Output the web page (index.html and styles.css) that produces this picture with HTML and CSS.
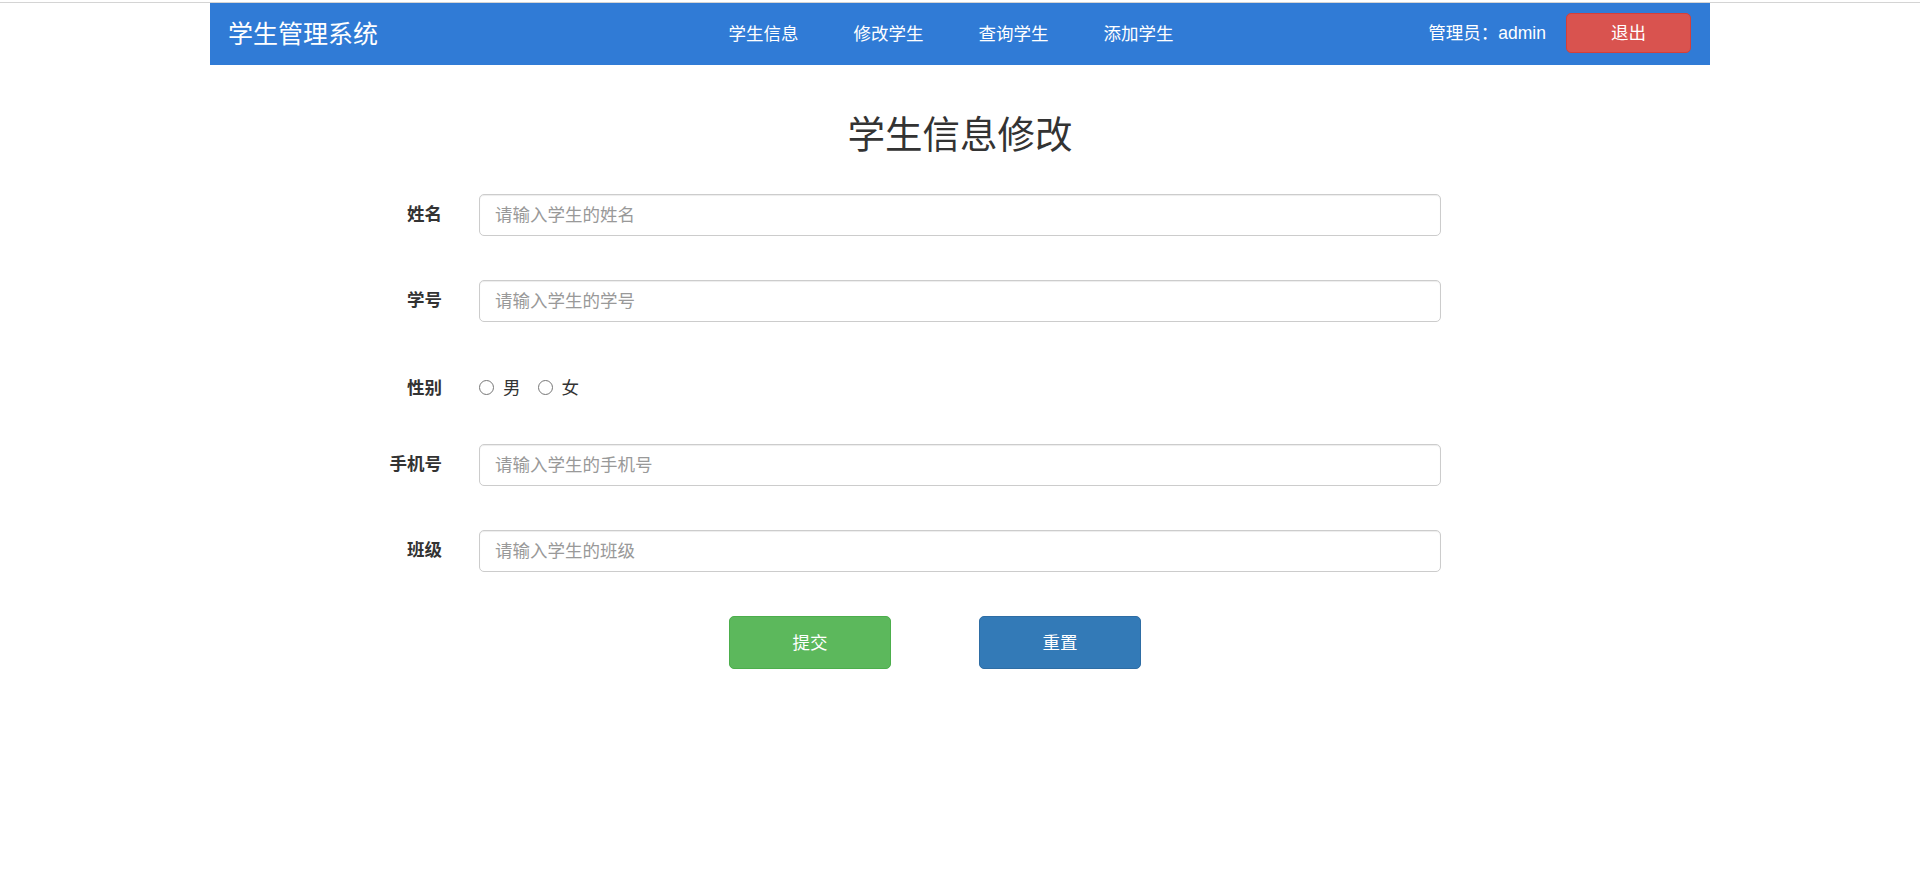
FILE: index.html
```html
<!DOCTYPE html>
<html lang="zh-CN">
<head>
<meta charset="utf-8">
<title>学生信息修改</title>
<link rel="stylesheet" href="styles.css">
</head>
<body>
<div class="topline"></div>
<nav class="navbar">
  <div class="brand">学生管理系统</div>
  <ul class="nav-links">
    <li>学生信息</li>
    <li>修改学生</li>
    <li>查询学生</li>
    <li>添加学生</li>
  </ul>
  <div class="user">
    <span class="user-name">管理员：admin</span>
    <button class="btn btn-danger">退出</button>
  </div>
</nav>
<main class="main">
  <h2 class="title">学生信息修改</h2>
  <form class="form">
    <div class="form-row">
      <label class="form-label">姓名</label>
      <input class="form-input" type="text" placeholder="请输入学生的姓名">
    </div>
    <div class="form-row">
      <label class="form-label">学号</label>
      <input class="form-input" type="text" placeholder="请输入学生的学号">
    </div>
    <div class="form-row form-row-radio">
      <label class="form-label">性别</label>
      <div class="radios">
        <label class="radio"><input type="radio" name="sex"><span>男</span></label>
        <label class="radio"><input type="radio" name="sex"><span>女</span></label>
      </div>
    </div>
    <div class="form-row">
      <label class="form-label">手机号</label>
      <input class="form-input" type="text" placeholder="请输入学生的手机号">
    </div>
    <div class="form-row">
      <label class="form-label">班级</label>
      <input class="form-input" type="text" placeholder="请输入学生的班级">
    </div>
    <div class="form-actions">
      <button type="button" class="btn btn-success">提交</button>
      <button type="reset" class="btn btn-primary">重置</button>
    </div>
  </form>
</main>
</body>
</html>
```

FILE: styles.css
```css
* { box-sizing: border-box; }
html, body {
  margin: 0;
  padding: 0;
  background: #fff;
}
body {
  font-family: "Liberation Sans", "Noto Sans CJK SC", sans-serif;
  font-size: 17.5px;
  color: #333;
  padding-top: 2px;
}
.topline {
  height: 1px;
  background: #d4d4d4;
}
.navbar {
  width: 1500px;
  height: 62px;
  margin: 0 auto;
  background: #307bd6;
  display: flex;
  align-items: center;
  color: #fff;
}
.brand {
  width: 491px;
  padding-left: 18px;
  font-size: 25px;
  line-height: 30px;
  margin-top: 0;
}
.nav-links {
  list-style: none;
  margin: 0;
  padding: 0;
  display: flex;
}
.nav-links li {
  padding: 0 27.5px;
  line-height: 24px;
  margin-top: -1px;
}
.user {
  margin-left: auto;
  display: flex;
  align-items: center;
  padding-right: 19px;
}
.user-name {
  margin-right: 20px;
  line-height: 24px;
  margin-top: -2px;
}
.btn {
  border: 1px solid transparent;
  color: #fff;
  font-family: inherit;
  font-size: 17.5px;
  border-radius: 5px;
  cursor: pointer;
  padding: 0;
}
.btn-danger {
  width: 125px;
  height: 40px;
  background: #d9534f;
  border-color: #d43f3a;
  margin-top: -3px;
  line-height: 36px;
}
.btn-success {
  background: #5cb85c;
  border-color: #4cae4c;
}
.btn-primary {
  background: #337ab7;
  border-color: #2e6da4;
}
.main {
  width: 1500px;
  margin: 0 auto;
}
.title {
  margin: 50px 0 38px;
  text-align: center;
  font-size: 37.5px;
  font-weight: 400;
  line-height: 41px;
  color: #333;
}
.form-row {
  display: grid;
  grid-template-columns: 232px 962px;
  column-gap: 37px;
  align-items: center;
  margin-bottom: 44px;
}
.form-label {
  text-align: right;
  font-weight: 700;
  color: #333;
  margin-bottom: 5px;
}
.form-input {
  height: 42px;
  width: 100%;
  border: 1px solid #ccc;
  border-radius: 5px;
  padding: 0 15px;
  font-family: inherit;
  font-size: 17.5px;
  color: #555;
  box-shadow: inset 0 1px 1px rgba(0,0,0,.075);
  outline: none;
}
.form-input::placeholder {
  color: #999;
}
.form-row-radio {
  height: 34px;
  padding-top: 8px;
  align-items: center;
}
.form-row-radio .form-label {
  margin-bottom: 2px;
}
.radios {
  display: flex;
  align-items: center;
}
.radio {
  display: flex;
  align-items: center;
  margin-right: 17px;
  font-weight: 400;
  color: #333;
}
.radio input {
  width: 15px;
  height: 15px;
  margin: 0 9px 0 0;
}
.radio span {
  line-height: 24px;
}
.form-actions {
  display: flex;
  gap: 88px;
  padding-left: 519px;
}
.form-actions .btn {
  width: 162px;
  height: 53px;
  padding-bottom: 2px;
}
```
